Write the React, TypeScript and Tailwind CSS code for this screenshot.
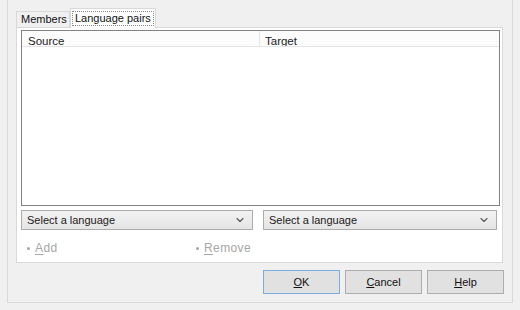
import { ChevronDown } from 'lucide-react';

function Select() {
  return (
    <div className="flex h-[20px] items-center justify-between border border-[#acacac] bg-gradient-to-b from-[#f2f2f2] to-[#e5e5e5] pl-[5px] pr-[6px] text-[11px] text-[#1a1a1a]">
      <span>Select a language</span>
      <ChevronDown size={12} strokeWidth={2.2} className="text-[#555]" />
    </div>
  );
}

function LinkAction({ letter, rest }: { letter: string; rest: string }) {
  return (
    <div className="flex items-center gap-[5px] text-[12px] tracking-[0.4px] text-[#a6a6a6]">
      <span className="h-[3px] w-[3px] rounded-full bg-[#a6a6a6]" />
      <span>
        <span className="underline underline-offset-2">{letter}</span>
        {rest}
      </span>
    </div>
  );
}

function Button({ letter, rest, primary }: { letter: string; rest: string; primary?: boolean }) {
  return (
    <button
      type="button"
      className={
        'h-[24px] w-[77px] border bg-[#e1e1e1] text-[11px] text-[#111] ' +
        (primary ? 'border-[#7aaee0]' : 'border-[#adadad]')
      }
    >
      <span className="underline underline-offset-1">{letter}</span>
      {rest}
    </button>
  );
}

export default function App() {
  return (
    <div className="h-[310px] w-[520px] bg-[#f0f0f0] font-['Liberation_Sans',Arial,sans-serif]">
      <div className="ml-[7px] h-[303px] w-[506px] border-x border-b border-[#d9d9d9] pl-[8px] pt-[7px]">
        <div className="flex h-[20px] items-end">
          <div className="flex h-[16px] w-[54px] items-center whitespace-nowrap border border-b-0 border-[#d9d9d9] bg-[#f0f0f0] pl-[4px] text-[11px] text-[#111]">
            Members
          </div>
          <div className="relative z-10 -mb-px flex h-[20px] w-[86px] items-start border border-b-0 border-[#d9d9d9] bg-white px-[1px] pt-[2px]">
            <div className="flex h-[15px] w-full items-center whitespace-nowrap border border-dotted border-[#888] pl-[2px] text-[11px] text-[#111]">
              Language pairs
            </div>
          </div>
        </div>
        <div className="h-[236px] w-[487px] border border-[#d9d9d9] bg-white pl-[4px] pt-[2px]">
          <div className="h-[176px] w-[479px] border border-[#828282] bg-white">
            <div className="flex h-[16px] overflow-hidden border-b border-[#e5e5e5] bg-[#fcfcfc] text-[11.5px] leading-[13px] text-[#222]">
              <div className="w-[238px] border-r border-[#e5e5e5] pl-[6px] pt-[4px]">Source</div>
              <div className="pl-[5px] pt-[4px]">Target</div>
            </div>
          </div>
          <div className="mt-[4px] flex gap-[10px]">
            <div className="w-[232px]">
              <Select />
            </div>
            <div className="w-[234px]">
              <Select />
            </div>
          </div>
          <div className="mt-[9px] flex pl-[6px]">
            <div className="w-[169px]">
              <LinkAction letter="A" rest="dd" />
            </div>
            <LinkAction letter="R" rest="emove" />
          </div>
        </div>
        <div className="mt-[7px] flex gap-[5px] pl-[247px]">
          <Button letter="O" rest="K" primary />
          <Button letter="C" rest="ancel" />
          <Button letter="H" rest="elp" />
        </div>
      </div>
    </div>
  );
}
